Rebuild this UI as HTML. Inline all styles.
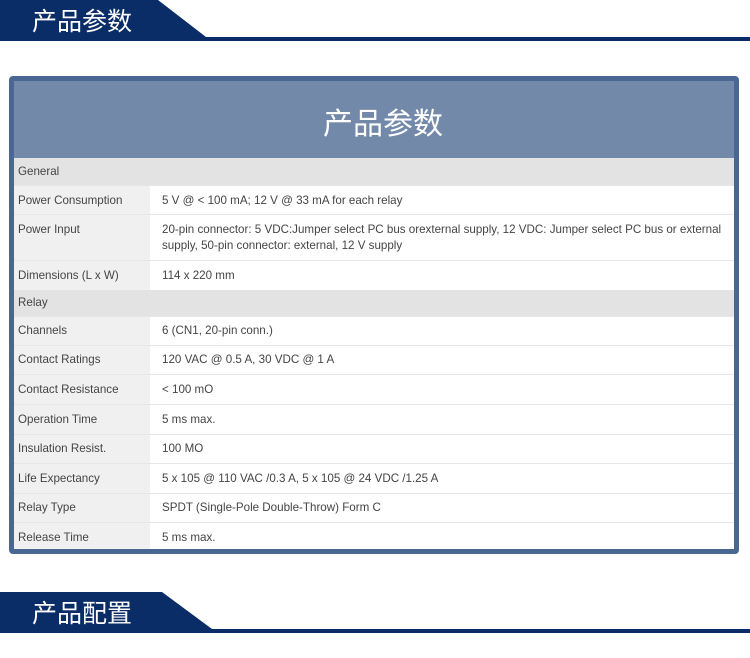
<!DOCTYPE html>
<html><head><meta charset="utf-8"><style>
body{margin:0;width:750px;height:658px;background:#fff;position:relative;overflow:hidden;font-family:"Liberation Sans","Noto Sans CJK SC",sans-serif}
.ban{position:absolute;left:0;width:750px;height:41px}
.ban .t{position:absolute;left:32px;top:3px;color:#fff;font-size:25px;font-family:"Noto Sans CJK SC",sans-serif;line-height:34px}
.box{position:absolute;left:9px;top:76px;width:720px;height:468px;border:5px solid #4a6793;border-radius:4px;background:#fff;overflow:hidden}
.hd{height:77px;background:#7389a9;color:#fff;font-size:30px;text-align:center;line-height:80px;padding-left:18px;box-sizing:border-box;font-family:"Noto Sans CJK SC",sans-serif}
.r{display:flex;border-top:1px solid #e6e6e6;box-sizing:border-box;font-size:11.6px;color:#444}
.l{width:136px;background:#f0f0f0;padding-left:4px;box-sizing:border-box}
.v{flex:1;padding-left:12px;padding-right:8px}
.s{background:#e3e3e3;padding-left:4px;border-top:0}
</style></head><body>
<svg class="ban" style="top:0" width="750" height="41"><polygon points="0,0 158,0 206,37 750,37 750,41 0,41" fill="#0a2d68"/></svg>
<div class="ban" style="top:0"><div class="t">产品参数</div></div>
<div class="box"><div class="hd">产品参数</div>
<div class="r s" style="height:27px;line-height:27px">General</div>
<div class="r" style="height:29px;line-height:29px"><div class="l">Power Consumption</div><div class="v">5 V @ &lt; 100 mA; 12 V @ 33 mA for each relay</div></div>
<div class="r" style="height:46px;line-height:16px"><div class="l" style="padding-top:7px">Power Input</div><div class="v" style="padding-top:7px">20-pin connector: 5 VDC:Jumper select PC bus orexternal supply, 12 VDC: Jumper select PC bus or external supply, 50-pin connector: external, 12 V supply</div></div>
<div class="r" style="height:30px;line-height:29px"><div class="l">Dimensions (L x W)</div><div class="v">114 x 220 mm</div></div>
<div class="r s" style="height:26px;line-height:26px">Relay</div>
<div class="r" style="height:29px;line-height:28px"><div class="l">Channels</div><div class="v">6 (CN1, 20-pin conn.)</div></div>
<div class="r" style="height:29px;line-height:28px"><div class="l">Contact Ratings</div><div class="v">120 VAC @ 0.5 A, 30 VDC @ 1 A</div></div>
<div class="r" style="height:30px;line-height:29px"><div class="l">Contact Resistance</div><div class="v">&lt; 100 mO</div></div>
<div class="r" style="height:30px;line-height:29px"><div class="l">Operation Time</div><div class="v">5 ms max.</div></div>
<div class="r" style="height:29px;line-height:28px"><div class="l">Insulation Resist.</div><div class="v">100 MO</div></div>
<div class="r" style="height:30px;line-height:29px"><div class="l">Life Expectancy</div><div class="v">5 x 105 @ 110 VAC /0.3 A, 5 x 105 @ 24 VDC /1.25 A</div></div>
<div class="r" style="height:29px;line-height:28px"><div class="l">Relay Type</div><div class="v">SPDT (Single-Pole Double-Throw) Form C</div></div>
<div class="r" style="height:30px;line-height:29px"><div class="l">Release Time</div><div class="v">5 ms max.</div></div>
</div>
<svg class="ban" style="top:592px" width="750" height="41"><polygon points="0,0 162,0 212,37 750,37 750,41 0,41" fill="#0a2d68"/></svg>
<div class="ban" style="top:592px"><div class="t">产品配置</div></div>
</body></html>
